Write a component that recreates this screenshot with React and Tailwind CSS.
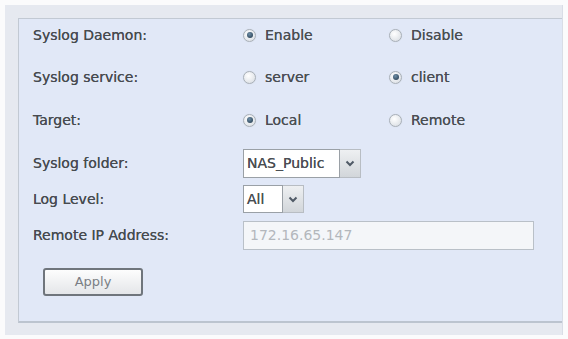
import React from "react";

function Radio({ checked, label }) {
  return (
    <div className="flex items-center gap-[9px]">
      <span
        className="flex h-[13px] w-[13px] items-center justify-center rounded-full border border-[#a9b0b8] bg-[radial-gradient(circle_at_40%_35%,#ffffff,#d5dae0)] shadow-[0_0_1px_#cfd5dd]"
      >
        {checked && (
          <span className="h-[6px] w-[6px] rounded-full bg-[radial-gradient(circle_at_40%_35%,#6f8fa8,#1d3346)]" />
        )}
      </span>
      <span className="text-[14px] text-[#4a4e53] [text-shadow:0_0_0.6px_#4a4e53]">{label}</span>
    </div>
  );
}

function Select({ value, width }) {
  return (
    <div className="flex h-full">
      <div
        className="flex items-center border border-[#9aa0a6] bg-white pl-[3px] text-[14px] text-[#4a4e53] [text-shadow:0_0_0.6px_#4a4e53]"
        style={{ width }}
      >
        {value}
      </div>
      <div className="flex w-[21px] items-center justify-center border border-l-0 border-[#b8bdc3] bg-[linear-gradient(#eef0f2,#d2d6da)]">
        <svg width="10" height="7" viewBox="0 0 10 7">
          <path d="M1.5 1.5 L5 5 L8.5 1.5" fill="none" stroke="#505a66" strokeWidth="2" />
        </svg>
      </div>
    </div>
  );
}

export default function App() {
  const row = "flex items-center";
  const label = "w-[210px] shrink-0 text-[14px] text-[#474b50] [text-shadow:0_0_0.6px_#474b50]";
  return (
    <div
      className="h-[339px] w-[568px] bg-[#fbfbfc] pl-[5px] pr-[5px] pt-[5px] pb-[4px]"
      style={{ fontFamily: '"DejaVu Sans", Verdana, sans-serif' }}
    >
      <div className="h-full w-full border-r border-[#d9dde6] bg-[#e6e9f0] pl-[13px] pt-[13px] pb-[12px]">
        <div className="flex h-full flex-col border-l border-t border-b-2 border-[#c2c9d3] border-b-[#bcc4cf] bg-[#e1e8f7] pl-[14px]">
          <div className={`${row} h-[32px]`}>
            <div className={label}>Syslog Daemon:</div>
            <div className="w-[146px]">
              <Radio checked label="Enable" />
            </div>
            <Radio label="Disable" />
          </div>
          <div className={`${row} mt-[10px] h-[32px]`}>
            <div className={label}>Syslog service:</div>
            <div className="w-[146px]">
              <Radio label="server" />
            </div>
            <Radio checked label="client" />
          </div>
          <div className={`${row} mt-[11px] h-[32px]`}>
            <div className={label}>Target:</div>
            <div className="w-[146px]">
              <Radio checked label="Local" />
            </div>
            <Radio label="Remote" />
          </div>
          <div className={`${row} mt-[13px] h-[29px]`}>
            <div className={label}>Syslog folder:</div>
            <Select value="NAS_Public" width={97} />
          </div>
          <div className={`${row} mt-[7px] h-[28px]`}>
            <div className={label}>Log Level:</div>
            <Select value="All" width={40} />
          </div>
          <div className={`${row} mt-[8px] h-[29px]`}>
            <div className={label}>Remote IP Address:</div>
            <div className="flex h-full w-[291px] items-center border border-[#b9c0c8] bg-[#f4f6f9] pl-[6px] text-[14px] text-[#b3b7bc]">
              172.16.65.147
            </div>
          </div>
          <div className="mt-[18px] pl-[10px]">
            <button className="flex h-[28px] w-[100px] items-center justify-center rounded-[3px] border-2 border-[#6f757c] bg-[linear-gradient(#fdfdfd,#e4e6e9)] text-[13px] text-[#7a7e84]">
              Apply
            </button>
          </div>
        </div>
      </div>
    </div>
  );
}
